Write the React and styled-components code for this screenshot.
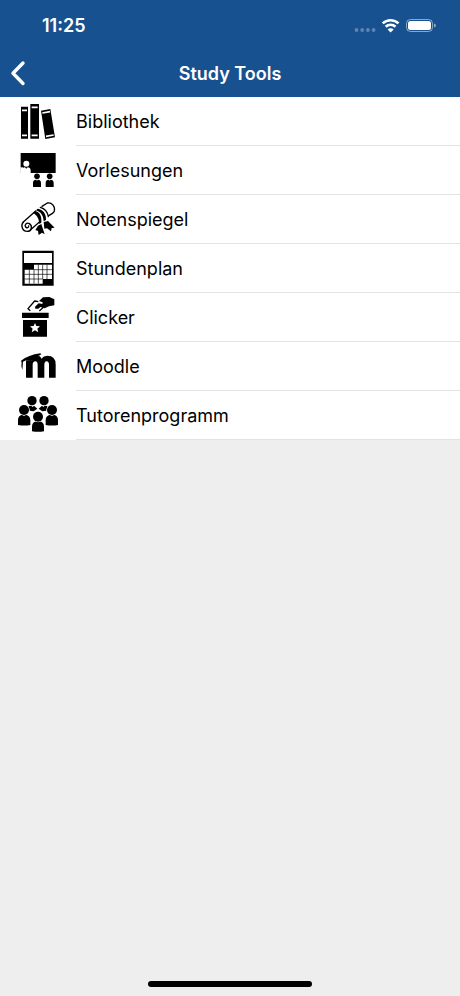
import React from "react";
import styled, { createGlobalStyle } from "styled-components";

const GlobalStyle = createGlobalStyle`
  * { box-sizing: border-box; }
  body {
    margin: 0;
    background: #eeeeee;
    font-family: Inter, "Liberation Sans", sans-serif;
    color: #000;
  }
`;

const Screen = styled.div`
  min-height: 100vh;
  display: flex;
  flex-direction: column;
  background: #eeeeee;
`;

const Header = styled.header`
  background: #18518f;
  color: #fff;
`;

const StatusBar = styled.div`
  height: 49px;
  padding: 2px 24px 0 42px;
  display: flex;
  align-items: center;
  justify-content: space-between;
`;

const Clock = styled.time`
  font-size: 18px;
  line-height: 24px;
  font-weight: 600;
`;

const StatusIcons = styled.svg`
  display: block;
  width: 82px;
  height: 18px;
`;

const NavBar = styled.div`
  height: 48px;
  padding: 2px 4px 0;
  display: grid;
  grid-template-columns: 40px 1fr 40px;
  align-items: center;
`;

const BackButton = styled.button`
  width: 40px;
  height: 40px;
  padding: 0;
  border: 0;
  background: none;
  color: inherit;
  cursor: pointer;
  svg { display: block; }
`;

const Title = styled.h1`
  margin: 0;
  font-size: 18px;
  line-height: 24px;
  font-weight: 600;
  text-align: center;
`;

const List = styled.ul`
  margin: 0;
  padding: 0;
  list-style: none;
  background: #fff;
`;

const Row = styled.a`
  display: flex;
  height: 49px;
  padding-left: 10px;
  gap: 6px;
  color: inherit;
  text-decoration: none;
`;

const Icon = styled.svg`
  flex: none;
  width: 60px;
  height: 48px;
`;

const Label = styled.span`
  flex: 1;
  display: flex;
  align-items: center;
  padding-top: 2px;
  border-bottom: 1px solid #e3e3e3;
  font-size: 18px;
  line-height: 24px;
`;

const HomeBar = styled.div`
  width: 164px;
  height: 6px;
  margin: auto auto 9px;
  border-radius: 3px;
  background: #000;
`;

const Books = () => (
  <Icon viewBox="0 -3 180 144" aria-hidden="true">
    <path d="M33 26h21v96H33zM61 18h26v104H61zM93 38l28-5 14 85-29 5z" />
    <g fill="none" stroke="#fff" strokeWidth="5">
      <path d="M36 37h15M36 112h15M65 28h18M65 112h18M97 45l23-4M108 115l23-4" />
    </g>
  </Icon>
);

const Student = ({ x, y }) => (
  <g transform={`translate(${x} ${y})`}>
    <circle cx="0" cy="0" r="8.5" />
    <path d="M-12 32V20c0-7 4-10 9-10L0 13l3-3c5 0 9 3 9 10v12z" />
  </g>
);

const Lecture = () => (
  <Icon viewBox="0 0 180 144" aria-hidden="true">
    <path d="M32 21h105v60H32z" />
    <g fill="#fff">
      <circle cx="49" cy="53" r="9" />
      <path d="M36 81V73c0-6 4-9 9-9l4 4 4-4c5 0 9 3 9 9v8z" />
      <path d="M31 64h8v18h-8z" />
    </g>
    <Student x={81} y={91} />
    <Student x={119} y={91} />
  </Icon>
);

const Diploma = () => (
  <Icon viewBox="0 -3 180 144" aria-hidden="true">
    <g fill="none" stroke="#000" strokeWidth="4" strokeLinecap="round" strokeLinejoin="round">
      <path d="M40 78L77 45M96 31L112 21C125 18 136 31 133 45Q131 51 116 59M89 77L61 102" />
      <path d="M40 78C31 88 37 106 52 106C66 106 68 89 58 83C50 78 42 87 47 93C50 97 57 95 56 90" />
      <path d="M91 34Q111 39 115 62" />
    </g>
    <path d="M75 45C89 47 96 61 94 80L88 84C87 66 80 57 69 51zM83 38C99 40 109 53 108 72L101 76C100 57 92 48 78 43z" />
    <path d="M84 89l10-5 10 31-8-5-10 7-2-12-8-3zM101 78l13-3 20 20-9 1-2 10-12-9-8 1z" />
  </Icon>
);

const Timetable = () => (
  <Icon viewBox="0 0 180 144" aria-hidden="true">
    <path d="M37 20h94v105H37z" />
    <path fill="#fff" d="M42 27h84v30H42zM72 62h54v43H98v14H44V77h28z" />
    <path
      fill="none"
      stroke="#000"
      strokeWidth="2"
      d="M58 77v42M72 77v42M85 62v57M98 62v43M111 62v43M72 77h54M44 91h82M44 105h54"
    />
  </Icon>
);

const BallotBox = () => (
  <Icon viewBox="0 3 180 144" aria-hidden="true">
    <path d="M36 62h80v16H36zM39 84h72v50H39z" />
    <path
      fill="#fff"
      d="M75 93l4 9 11 1-8 7 3 11-10-6-10 6 3-11-8-7 11-1z"
    />
    <path
      fill="none"
      stroke="#000"
      strokeWidth="4"
      strokeLinejoin="round"
      d="M61 56L54 50L74 27L85 29M88 57L101 45"
    />
    <path d="M87 27L99 16L118 15L133 22V40L117 43L104 49L91 45L85 50H76L75 44L86 34L97 36L98 31z" />
  </Icon>
);

const Moodle = () => (
  <Icon viewBox="0 0 180 144" aria-hidden="true">
    <path d="M48 107V55H67L75 44L88 42Q93 46 94 50Q101 41 112 41Q137 41 137 67V107H117V69Q117 58 110 58Q103 58 103 69V107H83V69Q83 58 76 58Q68 58 68 69V107z" />
    <path d="M33 56Q55 39 91 34L94 37L84 43V50Q65 60 50 54L39 59L37 84Q32 72 35 62z" />
  </Icon>
);

const Tutors = () => (
  <Icon viewBox="0 3 180 144" aria-hidden="true">
    <circle cx="66" cy="32" r="14" />
    <circle cx="102" cy="32" r="14" />
    <path d="M56 48L64 47L68 51L72 47L82 56L71 64L59 62zM112 48L104 47L100 51L96 47L86 56L97 64L109 62z" />
    <g stroke="#fff" strokeWidth="3" paintOrder="stroke">
      <path d="M24 105V90c0-9 5-14 12-16l6 3 6-3c7 2 13 7 13 16v15q-18 3-37 0zM107 105V90c0-9 6-14 13-16l6 3 6-3c7 2 12 7 12 16v15q-19 3-37 0z" />
      <circle cx="42" cy="60" r="15" />
      <circle cx="126" cy="60" r="15" />
      <path d="M66 124v-14c0-9 5-14 12-16l6 3 6-3c7 2 12 7 12 16v14q-18 3-36 0z" />
      <circle cx="84" cy="80" r="15" />
    </g>
  </Icon>
);

const tools = [
  { name: "Bibliothek", Glyph: Books },
  { name: "Vorlesungen", Glyph: Lecture },
  { name: "Notenspiegel", Glyph: Diploma },
  { name: "Stundenplan", Glyph: Timetable },
  { name: "Clicker", Glyph: BallotBox },
  { name: "Moodle", Glyph: Moodle },
  { name: "Tutorenprogramm", Glyph: Tutors },
];

export default function App() {
  return (
    <Screen>
      <GlobalStyle />
      <Header>
        <StatusBar>
          <Clock>11:25</Clock>
          <StatusIcons viewBox="0 0 82 18" aria-hidden="true">
            <g fill="#fff" fillOpacity="0.3">
              <circle cx="2.5" cy="13" r="1.9" />
              <circle cx="8.2" cy="13" r="1.9" />
              <circle cx="13.9" cy="13" r="1.9" />
              <circle cx="19.6" cy="13" r="1.9" />
            </g>
            <g fill="none" stroke="#fff" strokeWidth="2.6">
              <path d="M28.7 6.4a11.3 11.3 0 0 1 15.8 0M31.7 9.8a7 7 0 0 1 9.8 0" />
            </g>
            <path fill="#fff" d="M36.6 15.6l-3-3a4.3 4.3 0 0 1 6 0z" />
            <rect x="52.5" y="2.5" width="26" height="12" rx="4" fill="none" stroke="#fff" strokeOpacity="0.5" />
            <rect x="54" y="4" width="23" height="9" rx="2.5" fill="#fff" />
            <path d="M80 6.5q2 .5 2 2t-2 2z" fill="#fff" fillOpacity="0.5" />
          </StatusIcons>
        </StatusBar>
        <NavBar>
          <BackButton type="button" aria-label="Zurück">
            <svg width="40" height="40" viewBox="0 0 40 40" fill="none" stroke="#fff" strokeWidth="3.4" strokeLinecap="round" strokeLinejoin="round" aria-hidden="true">
              <path d="M19 9L9 19.3L19 29.5" />
            </svg>
          </BackButton>
          <Title>Study Tools</Title>
        </NavBar>
      </Header>
      <main>
        <List>
          {tools.map(({ name, Glyph }) => (
            <li key={name}>
              <Row href={`#${name.toLowerCase()}`}>
                <Glyph />
                <Label>{name}</Label>
              </Row>
            </li>
          ))}
        </List>
      </main>
      <HomeBar />
    </Screen>
  );
}
